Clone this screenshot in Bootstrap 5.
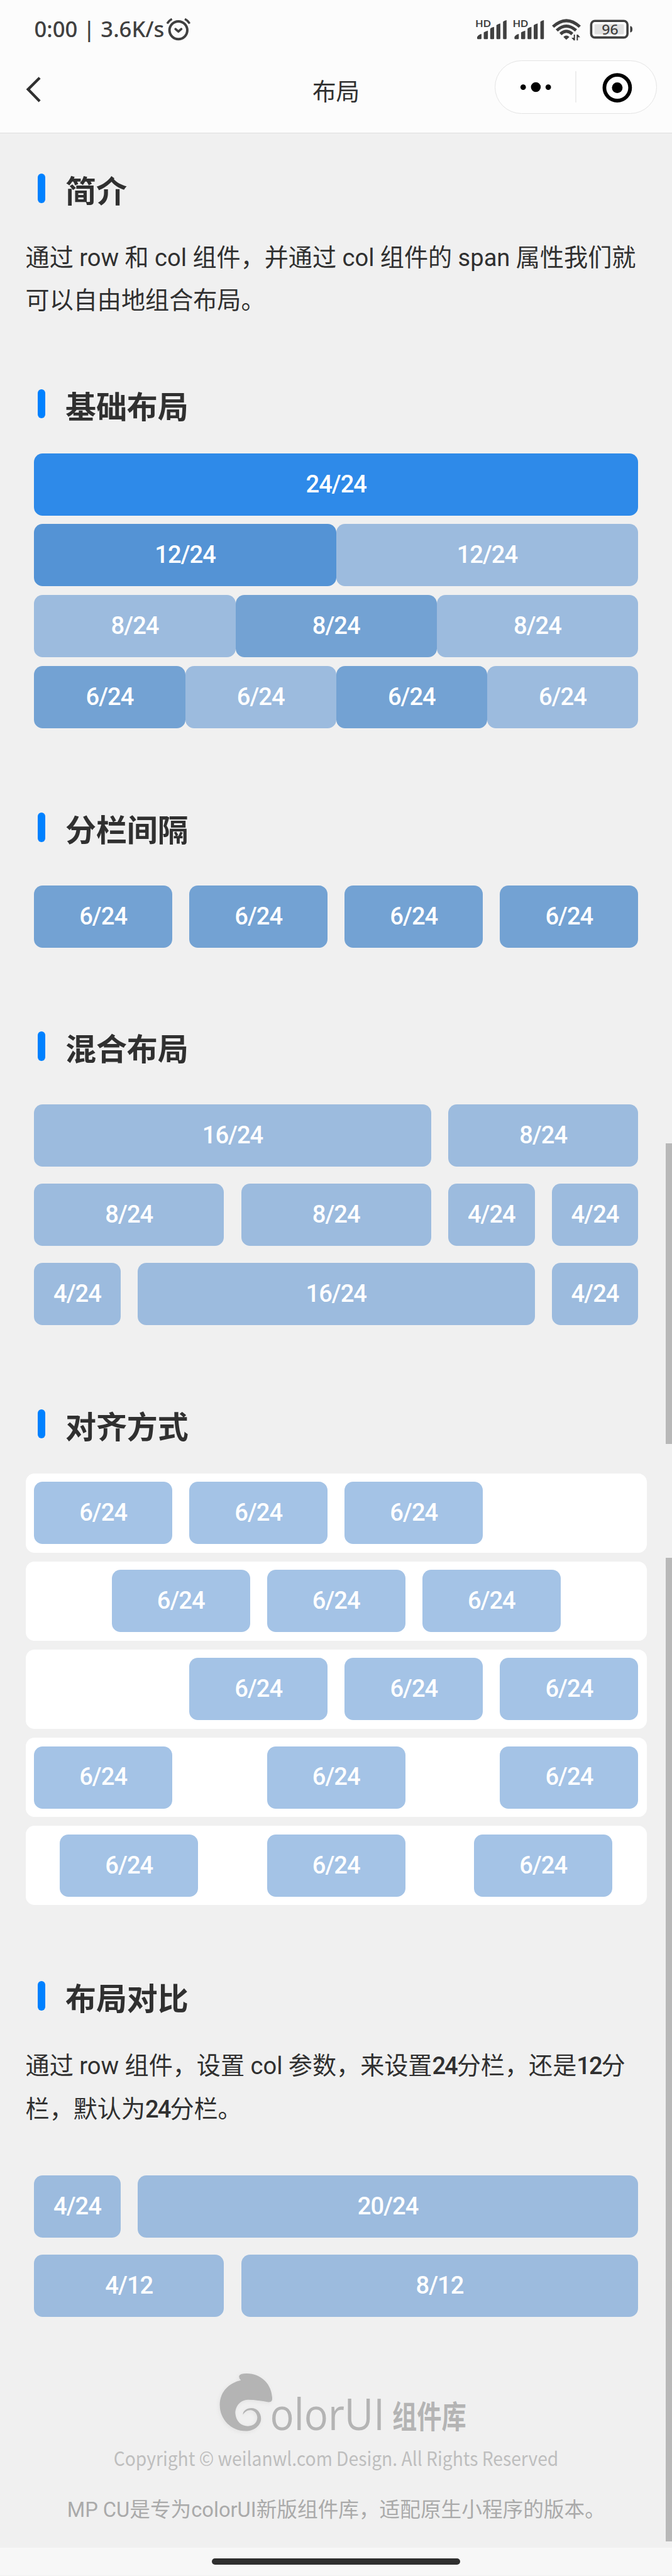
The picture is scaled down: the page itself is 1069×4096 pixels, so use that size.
<!DOCTYPE html>
<html lang="zh-CN">
<head>
<meta charset="utf-8">
<meta name="viewport" content="width=device-width, initial-scale=1">
<title>布局</title>
<link href="https://cdn.jsdelivr.net/npm/bootstrap@5.3.0/dist/css/bootstrap.min.css" rel="stylesheet">
<style>
  html { font-size: 9.898px; }
  body { font-family: Roboto, "Noto Sans CJK SC", sans-serif; font-size: 3.85rem; color: #303030; background: #f0f0f0; height: 413.7rem; overflow: hidden; }
  .app-head { height: 21.4rem; background: #fcfcfc; border-bottom: 1px solid #dedede; }
  .status-row { height: 9.7rem; padding: 0 6.1rem 3.15rem 5.5rem; color: #404040; }
  .status-text { font-family: "Noto Sans", sans-serif; font-weight: 500; font-size: 3.5rem; line-height: 3.8rem; white-space: pre; }
  .alarm-ico { width: 4rem; height: 3.7rem; margin-left: .3rem; }
  .signal-ico { width: 25.4rem; height: 3.6rem; }
  .nav-row { height: 8.6rem; padding-left: 4.1rem; padding-right: 2.4rem; }
  .back-ico { width: 2.5rem; height: 4.1rem; margin-top: .8rem; }
  .page-name { font-size: 3.8rem; line-height: 1; padding-top: 1.6rem; }
  .side-cell { width: 24.4rem; }
  .capsule { width: 26.1rem; height: 8.6rem; border: 1px solid #e4e4e4; border-radius: 4.3rem; background: #fefefe; }
  .capsule svg { width: 100%; height: 100%; }
  .body-pad { padding: 0 4.05rem 0 4.1rem; }
  .sec-title { height: 4.7rem; margin: 12.15rem 0 5.6rem 1.95rem; font-size: 4.95rem; font-weight: 700; line-height: 4.7rem; }
  .sec-title::before { content: ""; width: 1.2rem; height: 4.7rem; border-radius: .6rem; background: #0081ff; margin-right: 3.25rem; }
  .sec-title span { padding-top: .7rem; }
  .first-title { margin-top: 6.5rem; }
  .after-text { margin-top: 10.7rem; }
  .para { line-height: 6.93rem; margin: -.25rem 0 0; white-space: nowrap; }
  .para + .contrast { margin-top: 5.75rem; }
  .num { font-weight: 500; letter-spacing: -.2rem; }
  .tile { height: 10rem; border-radius: 1.4rem; font-weight: 500; color: #fff; background: #9cbbde; letter-spacing: -.1rem; }
  .tile-deep { background: #2e8ae9; }
  .tile-mid { background: #5493d5; }
  .tile-soft { background: #73a2d3; }
  .flush-rows { margin: 0 1.4rem; padding-bottom: 1.4rem; gap: 1.4rem; }
  .gap-row { --bs-gutter-x: 2.75rem; padding: 1.37rem 0; }
  .align-list { gap: 1.42rem; }
  .align-list .gap-row { background: #fff; border-radius: 1.4rem; }
  .align-list .tile { background: #a4c3e6; }
  .last-title { margin-top: 12.25rem; margin-bottom: 5.75rem; }
  .brand { margin-top: 6.6rem; }
  .brand svg { width: 71.3rem; height: 17rem; }
  .tagline { font-size: 3.3rem; line-height: 5rem; margin-top: 3.65rem; color: #aaa; white-space: nowrap; }
  .home-area { height: 4.4rem; background: #f7f7f7; padding-top: 1.7rem; }
  .home-pill { width: 39.9rem; height: 1rem; border-radius: .5rem; background: #2f2f2f; }
  .scroll-thumb { width: 1.05rem; right: 0; background: #b8b8b8; }
  .thumb-a { top: 183.7rem; height: 48.3rem; }
  .thumb-b { top: 250.3rem; height: 158rem; }
</style>
</head>
<body class="position-relative d-flex flex-column">
<header class="app-head flex-shrink-0">
  <div class="status-row d-flex justify-content-between align-items-end">
    <div class="d-flex align-items-end">
      <span class="status-text">0:00 | 3.6K/s</span>
      <svg class="alarm-ico" viewBox="0 0 120 111" fill="none" stroke="#404040" stroke-linecap="round" stroke-linejoin="round"><circle cx="60" cy="61" r="43" stroke-width="12"/><path d="M46 55l14 12 14-12" stroke-width="11"/><path d="M6 29Q14 14 29 7M91 7Q106 14 114 29" stroke-width="10" stroke-linecap="butt"/></svg>
    </div>
    <svg class="signal-ico" viewBox="76 58 762 108" fill="#404040">
      <g id="sig"><text x="74" y="99" font-family="Lato, sans-serif" font-weight="700" font-size="47" textLength="74" lengthAdjust="spacingAndGlyphs">HD</text>
      <path d="M82 148Q90 136 103 134V155Q103 159 99 159H86Q82 159 82 155ZM114 126Q122 121 134 118V155Q134 159 130 159H118Q114 159 114 155ZM145 108Q151 102 164 100V155Q164 159 160 159H149Q145 159 145 155ZM175 91Q181 86 194 83V155Q194 159 190 159H179Q175 159 175 155ZM207 75Q213 69 224 67V155Q224 159 220 159H211Q207 159 207 155Z"/></g>
      <use href="#sig" x="180"/>
      <g fill="none" stroke="#404040" stroke-width="15"><path d="M448 99Q512 40 577 99"/><path d="M466 117Q512 75 559 117"/><path d="M484 134Q512 108 541 134"/></g>
      <path d="M498 148Q512 134 527 148L512 162Z"/>
      <path d="M548 137h6v28h-6L537 152h11ZM562 165h6V150h11L568 137h-6Z"/>
      <rect x="632" y="71" width="175" height="80" rx="18" fill="#fcfcfc" stroke="#404040" stroke-width="11"/>
      <rect x="648" y="87" width="142" height="48" rx="5" fill="#e0e0e0"/>
      <path d="M820 96q11 0 11 15t-11 15Z"/>
      <text x="683" y="136" font-family="Noto Sans, sans-serif" font-weight="500" font-size="68" textLength="80" lengthAdjust="spacingAndGlyphs">96</text>
    </svg>
  </div>
  <div class="nav-row d-flex justify-content-between align-items-center">
    <div class="side-cell"><svg class="back-ico d-block" viewBox="0 0 75 123" fill="none" stroke="#303030" stroke-width="13"><path d="M67 5L11 61l56 57"/></svg></div>
    <div class="page-name">布局</div>
    <div class="capsule">
      <svg class="d-block" viewBox="166 262 781 256"><circle cx="298" cy="390" r="13.500"/><circle cx="360" cy="390" r="24"/><circle cx="421" cy="390" r="13.500"/><path d="M556 312v153" stroke="#dcdcdc" stroke-width="3"/><circle cx="759" cy="393" r="63" fill="none" stroke="#000" stroke-width="18"/><circle cx="759" cy="393" r="26"/></svg>
    </div>
  </div>
</header>

<main class="body-pad flex-grow-1">
  <h2 class="sec-title first-title d-flex"><span>简介</span></h2>
  <p class="para">通过 row 和 col 组件，并通过 col 组件的 span 属性我们就<br>可以自由地组合布局。</p>

  <h2 class="sec-title after-text d-flex"><span>基础布局</span></h2>
  <div class="flush-rows d-flex flex-column">
    <div class="row g-0">
      <div class="col-12"><div class="tile tile-deep d-flex align-items-center justify-content-center">24/24</div></div>
    </div>
    <div class="row g-0">
      <div class="col-6"><div class="tile tile-mid d-flex align-items-center justify-content-center">12/24</div></div>
      <div class="col-6"><div class="tile d-flex align-items-center justify-content-center">12/24</div></div>
    </div>
    <div class="row g-0">
      <div class="col-4"><div class="tile d-flex align-items-center justify-content-center">8/24</div></div>
      <div class="col-4"><div class="tile tile-soft d-flex align-items-center justify-content-center">8/24</div></div>
      <div class="col-4"><div class="tile d-flex align-items-center justify-content-center">8/24</div></div>
    </div>
    <div class="row g-0">
      <div class="col-3"><div class="tile tile-soft d-flex align-items-center justify-content-center">6/24</div></div>
      <div class="col-3"><div class="tile d-flex align-items-center justify-content-center">6/24</div></div>
      <div class="col-3"><div class="tile tile-soft d-flex align-items-center justify-content-center">6/24</div></div>
      <div class="col-3"><div class="tile d-flex align-items-center justify-content-center">6/24</div></div>
    </div>
  </div>

  <h2 class="sec-title d-flex"><span>分栏间隔</span></h2>
  <div class="row gap-row mx-0">
    <div class="col-3"><div class="tile tile-soft d-flex align-items-center justify-content-center">6/24</div></div>
    <div class="col-3"><div class="tile tile-soft d-flex align-items-center justify-content-center">6/24</div></div>
    <div class="col-3"><div class="tile tile-soft d-flex align-items-center justify-content-center">6/24</div></div>
    <div class="col-3"><div class="tile tile-soft d-flex align-items-center justify-content-center">6/24</div></div>
  </div>

  <h2 class="sec-title d-flex"><span>混合布局</span></h2>
  <div class="row gap-row mx-0">
    <div class="col-8"><div class="tile d-flex align-items-center justify-content-center">16/24</div></div>
    <div class="col-4"><div class="tile d-flex align-items-center justify-content-center">8/24</div></div>
  </div>
  <div class="row gap-row mx-0">
    <div class="col-4"><div class="tile d-flex align-items-center justify-content-center">8/24</div></div>
    <div class="col-4"><div class="tile d-flex align-items-center justify-content-center">8/24</div></div>
    <div class="col-2"><div class="tile d-flex align-items-center justify-content-center">4/24</div></div>
    <div class="col-2"><div class="tile d-flex align-items-center justify-content-center">4/24</div></div>
  </div>
  <div class="row gap-row mx-0">
    <div class="col-2"><div class="tile d-flex align-items-center justify-content-center">4/24</div></div>
    <div class="col-8"><div class="tile d-flex align-items-center justify-content-center">16/24</div></div>
    <div class="col-2"><div class="tile d-flex align-items-center justify-content-center">4/24</div></div>
  </div>

  <h2 class="sec-title d-flex"><span>对齐方式</span></h2>
  <div class="align-list d-flex flex-column">
    <div class="row gap-row mx-0 justify-content-start">
      <div class="col-3"><div class="tile d-flex align-items-center justify-content-center">6/24</div></div>
      <div class="col-3"><div class="tile d-flex align-items-center justify-content-center">6/24</div></div>
      <div class="col-3"><div class="tile d-flex align-items-center justify-content-center">6/24</div></div>
    </div>
    <div class="row gap-row mx-0 justify-content-center">
      <div class="col-3"><div class="tile d-flex align-items-center justify-content-center">6/24</div></div>
      <div class="col-3"><div class="tile d-flex align-items-center justify-content-center">6/24</div></div>
      <div class="col-3"><div class="tile d-flex align-items-center justify-content-center">6/24</div></div>
    </div>
    <div class="row gap-row mx-0 justify-content-end">
      <div class="col-3"><div class="tile d-flex align-items-center justify-content-center">6/24</div></div>
      <div class="col-3"><div class="tile d-flex align-items-center justify-content-center">6/24</div></div>
      <div class="col-3"><div class="tile d-flex align-items-center justify-content-center">6/24</div></div>
    </div>
    <div class="row gap-row mx-0 justify-content-between">
      <div class="col-3"><div class="tile d-flex align-items-center justify-content-center">6/24</div></div>
      <div class="col-3"><div class="tile d-flex align-items-center justify-content-center">6/24</div></div>
      <div class="col-3"><div class="tile d-flex align-items-center justify-content-center">6/24</div></div>
    </div>
    <div class="row gap-row mx-0 justify-content-around">
      <div class="col-3"><div class="tile d-flex align-items-center justify-content-center">6/24</div></div>
      <div class="col-3"><div class="tile d-flex align-items-center justify-content-center">6/24</div></div>
      <div class="col-3"><div class="tile d-flex align-items-center justify-content-center">6/24</div></div>
    </div>
  </div>

  <h2 class="sec-title last-title d-flex"><span>布局对比</span></h2>
  <p class="para">通过 row 组件，设置 col 参数，来设置<span class="num">24</span>分栏，还是<span class="num">12</span>分<br>栏，默认为<span class="num">24</span>分栏。</p>
  <div class="contrast">
    <div class="row gap-row mx-0">
      <div class="col-2"><div class="tile d-flex align-items-center justify-content-center">4/24</div></div>
      <div class="col-10"><div class="tile d-flex align-items-center justify-content-center">20/24</div></div>
    </div>
    <div class="row gap-row mx-0">
      <div class="col-4"><div class="tile d-flex align-items-center justify-content-center">4/12</div></div>
      <div class="col-8"><div class="tile d-flex align-items-center justify-content-center">8/12</div></div>
    </div>
  </div>

  <footer class="brand text-center">
    <svg class="d-block mx-auto overflow-visible" viewBox="-438 60 2139 510" fill="#b4b4b4">
      <defs><filter id="glow" x="-20%" y="-20%" width="140%" height="140%"><feDropShadow dx="-3" dy="5" stdDeviation="9" flood-color="#000" flood-opacity=".06"/></filter></defs>
      <path filter="url(#glow)" d="M163 106Q165 93 200 93C270 93 322 145 323 215Q322 233 303 231C270 226 240 220 205 220C165 222 145 255 145 285C148 325 175 347 205 347C235 347 251 328 251 305C250 285 235 270 218 270C200 270 190 280 182 292C180 276 198 260 222 260C250 260 269 282 269 312C268 345 235 370 195 371C125 371 70 315 70 245C70 185 110 140 172 126Q162 118 163 106Z"/>
      <text x="312" y="365" font-family="Open Sans, sans-serif" font-weight="400" font-size="208" textLength="553" lengthAdjust="spacingAndGlyphs">olorUI</text>
      <text transform="translate(902 358) scale(1 1.260)" font-family="Noto Sans CJK SC, sans-serif" font-weight="700" font-size="119">组件库</text>
      <text x="-442" y="540" font-family="Noto Sans CJK SC, sans-serif" fill="#bebebe" font-size="93" textLength="2145" lengthAdjust="spacingAndGlyphs">Copyright © weilanwl.com Design. All Rights Reserved</text>
    </svg>
    <p class="tagline mb-0">MP CU是专为colorUI新版组件库，适配原生小程序的版本。</p>
  </footer>
</main>

<div class="home-area flex-shrink-0"><div class="home-pill mx-auto"></div></div>
<div class="scroll-thumb thumb-a position-absolute"></div>
<div class="scroll-thumb thumb-b position-absolute"></div>
<script src="https://cdn.jsdelivr.net/npm/bootstrap@5.3.0/dist/js/bootstrap.bundle.min.js"></script>
</body>
</html>
